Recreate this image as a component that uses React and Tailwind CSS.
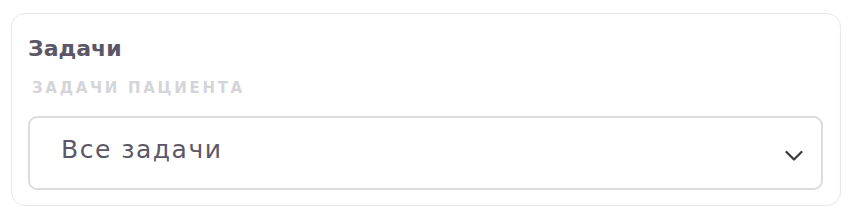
import React from "react";

export default function App() {
  return (
    <div className="w-[852px] h-[206px] bg-white pl-[11px] pr-[11px] pt-[13px] overflow-hidden" style={{ fontFamily: "'DejaVu Sans', sans-serif" }}>
      <div className="h-[193px] rounded-[14px] border border-[#e3e7f1] pl-[16px] pr-[17px] pt-[21px]">
        <div className="text-[22px] leading-[27px] font-bold text-[#5b5767]">Задачи</div>
        <div className="mt-[18px] text-[15px] leading-[16px] font-semibold uppercase tracking-[2.7px] text-[#d4d4d9] pl-[4px]">Задачи пациента</div>
        <div className="mt-[20px] h-[74px] rounded-[9px] border-2 border-[#dcdce0] flex items-center justify-between pl-[31px] pr-[18px] pb-[6px]">
          <span className="text-[25px] tracking-[1.5px] text-[#5b5766]">Все задачи</span>
          <svg className="mt-[11px]" width="18" height="11" viewBox="0 0 18 11" fill="none">
            <path d="M1.5 2l7.5 7.5 7.5-7.5" stroke="#3a3a3d" strokeWidth="2.2" strokeLinecap="round" strokeLinejoin="round" />
          </svg>
        </div>
      </div>
    </div>
  );
}
